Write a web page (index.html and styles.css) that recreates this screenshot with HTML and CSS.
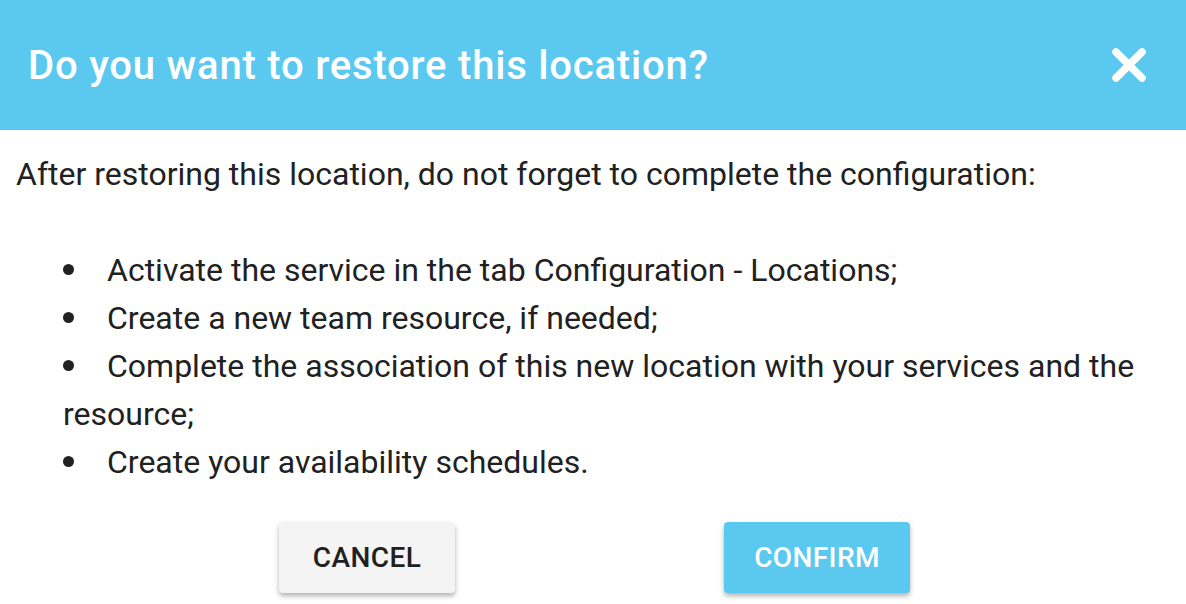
FILE: index.html
```html
<!DOCTYPE html>
<html lang="en">
<head>
<meta charset="utf-8">
<link rel="stylesheet" href="styles.css">
</head>
<body>
<div class="dialog">
  <header class="dialog-header">
    <h1 class="dialog-title">Do you want to restore this location?</h1>
    <button class="close-btn" aria-label="Close">
      <svg width="34" height="34" viewBox="0 0 34 34"><path d="M4 4 L30 30 M30 4 L4 30" stroke="#fff" stroke-width="7.5" stroke-linecap="round" fill="none"/></svg>
    </button>
  </header>
  <div class="dialog-body">
    <p class="intro">After restoring this location, do not forget to complete the configuration:</p>
    <ul class="steps">
      <li>Activate the service in the tab Configuration - Locations;</li>
      <li>Create a new team resource, if needed;</li>
      <li>Complete the association of this new location with your services and the resource;</li>
      <li>Create your availability schedules.</li>
    </ul>
    <div class="actions">
      <button class="btn btn-cancel">CANCEL</button>
      <button class="btn btn-confirm">CONFIRM</button>
    </div>
  </div>
</div>
</body>
</html>
```
FILE: styles.css
```css
html, body {
  margin: 0;
  padding: 0;
  background: #fff;
}
body {
  font-family: Roboto, "Liberation Sans", sans-serif;
  color: #212121;
}
.dialog {
  width: 1186px;
  height: 604px;
  overflow: hidden;
}
.dialog-header {
  height: 130px;
  background: #5bc9ef;
  display: flex;
  align-items: center;
  justify-content: space-between;
  padding: 0 40px 0 28px;
  box-sizing: border-box;
}
.dialog-title {
  margin: 0;
  color: #fff;
  font-weight: 500;
  font-size: 40px;
  letter-spacing: 0.8px;
}
.close-btn {
  background: none;
  border: 0;
  padding: 0;
  width: 34px;
  height: 34px;
  display: flex;
  cursor: pointer;
}
.dialog-body {
  padding: 20px 16px 0 16px;
}
.intro {
  margin: 0;
  font-size: 32px;
  line-height: 48px;
}
.steps {
  list-style: none;
  margin: 48px 0 0 0;
  padding: 0 0 0 47px;
  font-size: 32px;
  line-height: 48px;
}
.steps li::before {
  content: "";
  display: inline-block;
  width: 11px;
  height: 11px;
  border-radius: 50%;
  background: #212121;
  vertical-align: 6px;
  margin-right: 33px;
}
.actions {
  display: flex;
  justify-content: center;
  gap: 269px;
  margin-top: 36px;
  padding-left: 3px;
}
.btn {
  font-family: Roboto, "Liberation Sans", sans-serif;
  font-size: 28px;
  font-weight: 500;
  letter-spacing: 0.4px;
  height: 71px;
  border: 0;
  border-radius: 4px;
  box-shadow: 0 3px 5px rgba(0,0,0,0.3);
  cursor: pointer;
}
.btn-cancel {
  width: 176px;
  background: #f4f4f4;
  color: #212121;
}
.btn-confirm {
  width: 186px;
  background: #5bc9ef;
  color: #fff;
}
```
